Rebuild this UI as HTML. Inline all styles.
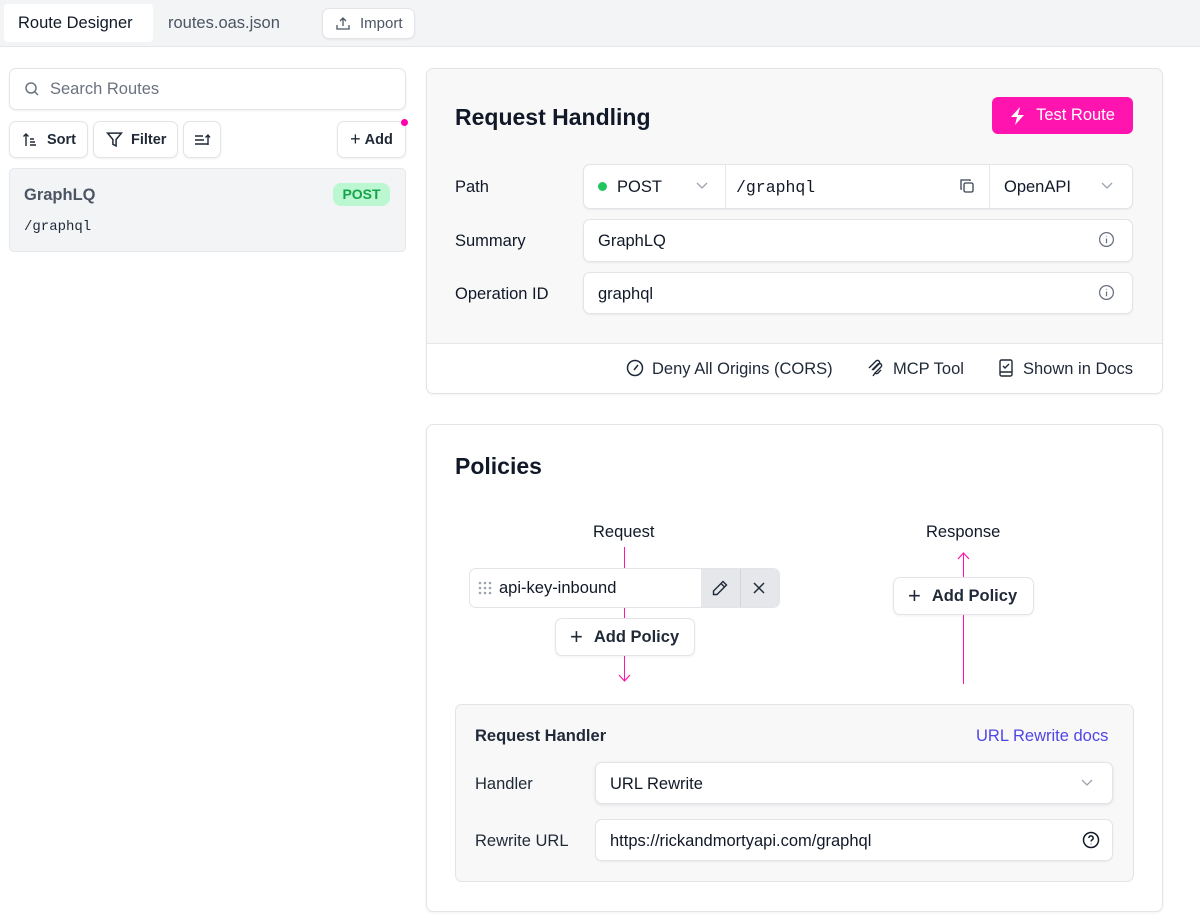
<!DOCTYPE html>
<html><head><style>
*{box-sizing:border-box;margin:0;padding:0}
body{width:1200px;height:924px;position:relative;background:#fff;font-family:"Liberation Sans",sans-serif;color:#111827;overflow:hidden}
.a{position:absolute}
.box{position:absolute;border:1px solid #e2e4e8;border-radius:7px;background:#fff;box-shadow:0 1px 2px rgba(0,0,0,.06)}
.t{position:absolute;white-space:nowrap}
.fx{display:flex;align-items:center}
svg{display:block}
.mono{font-family:"Liberation Mono",monospace}
</style></head><body>
<div class="a" style="left:0;top:0;width:1200px;height:47px;background:#f3f4f6;border-bottom:1px solid #e5e7eb"></div>
<div class="a" style="left:4px;top:4px;width:149px;height:38px;background:#fff;border-radius:4px"></div>
<div class="t" style="left:18px;top:14px;font-size:16.5px;color:#111827">Route Designer</div>
<div class="t" style="left:168px;top:14px;font-size:16.5px;color:#4b5563">routes.oas.json</div>
<div class="box fx" style="left:322px;top:8px;width:93px;height:31px;padding-left:12px;font-size:15px;color:#4b5563">
<svg width="16" height="16" viewBox="0 0 16 16" fill="none" stroke="#4b5563" stroke-width="1.3"><path d="M8 10V2M5 5l3-3 3 3M2 9v4h12V9"/></svg><span style="margin-left:9px">Import</span></div>

<div class="box fx" style="left:9px;top:68px;width:397px;height:42px;padding-left:14px;font-size:16.5px;color:#6b7280">
<svg width="16" height="16" viewBox="0 0 16 16" fill="none" stroke="#6b7280" stroke-width="1.5"><circle cx="7" cy="7" r="5"/><path d="M11 11l3 3"/></svg><span style="margin-left:10px">Search Routes</span></div>
<div class="box fx" style="left:9px;top:121px;width:79px;height:37px;padding-left:12px;font-size:14.5px;font-weight:bold;color:#1f2937">
<svg width="16" height="16" viewBox="0 0 16 16" fill="none" stroke="#1f2937" stroke-width="1.4"><path d="M4 14V2M1.5 4.5L4 2l2.5 2.5M8 7h4M8 10h5M8 13h6"/></svg><span style="margin-left:9px">Sort</span></div>
<div class="box fx" style="left:93px;top:121px;width:85px;height:37px;padding-left:12px;font-size:14.5px;font-weight:bold;color:#1f2937">
<svg width="17" height="17" viewBox="0 0 16 16" fill="none" stroke="#1f2937" stroke-width="1.4"><path d="M1.5 2h13L9.5 8v6l-3-1.5V8z"/></svg><span style="margin-left:8px">Filter</span></div>
<div class="box fx" style="left:183px;top:121px;width:38px;height:37px;justify-content:center">
<svg width="17" height="16" viewBox="0 0 17 16" fill="none" stroke="#1f2937" stroke-width="1.4"><path d="M1 4h8M1 8h9M1 12h13M14 13V3M11.5 5.5L14 3l2 2.5"/></svg></div>
<div class="box fx" style="left:337px;top:121px;width:69px;height:37px;justify-content:center;font-size:14.5px;font-weight:bold;color:#1f2937"><span style="font-weight:normal;font-size:18px;margin-right:4px">+</span>Add</div>
<div class="a" style="left:401px;top:119px;width:7px;height:7px;border-radius:50%;background:#ff00aa"></div>
<div class="a" style="left:9px;top:168px;width:397px;height:84px;background:#f3f4f6;border:1px solid #e5e7eb;border-radius:5px"></div>
<div class="t" style="left:24px;top:186px;font-size:16.5px;font-weight:bold;color:#4b5563">GraphLQ</div>
<div class="a" style="left:333px;top:183px;width:57px;height:23px;background:#bbf7d0;border-radius:8px;color:#16a34a;font-weight:bold;font-size:14px;text-align:center;line-height:23px">POST</div>
<div class="t mono" style="left:24px;top:219px;font-size:14px;color:#1f2937">/graphql</div>

<div class="a" style="left:426px;top:68px;width:737px;height:326px;border:1px solid #e2e4e8;border-radius:7px;background:#fff;overflow:hidden;box-shadow:0 1px 2px rgba(0,0,0,.05)">
<div class="a" style="left:0;top:0;width:737px;height:275px;background:#f8f8f9;border-bottom:1px solid #e5e7eb"></div>
</div>
<div class="t" style="left:455px;top:104px;font-size:23px;font-weight:bold">Request Handling</div>
<div class="a fx" style="left:992px;top:97px;width:141px;height:37px;background:#ff14b0;border-radius:6px;color:#fff;font-size:16.5px;justify-content:center">
<svg width="16" height="18" viewBox="0 0 16 18" fill="#fff"><path d="M10 0L1 10h6l-2 8 9-10H8z"/></svg><span style="margin-left:10px">Test Route</span></div>

<div class="t" style="left:455px;top:178px;font-size:16.5px">Path</div>
<div class="t" style="left:455px;top:232px;font-size:16.5px">Summary</div>
<div class="t" style="left:455px;top:285px;font-size:16.5px">Operation ID</div>

<div class="box" style="left:583px;top:164px;width:550px;height:45px"></div>
<div class="a" style="left:725px;top:165px;width:1px;height:43px;background:#e5e7eb"></div>
<div class="a" style="left:989px;top:165px;width:1px;height:43px;background:#e5e7eb"></div>
<div class="a" style="left:598px;top:182px;width:9px;height:9px;border-radius:50%;background:#22c55e"></div>
<div class="t" style="left:617px;top:178px;font-size:16.5px">POST</div>
<svg class="a" style="left:695px;top:181px" width="14" height="10" viewBox="0 0 14 10" fill="none" stroke="#9ca3af" stroke-width="1.3"><path d="M2 2l5 5 5-5"/></svg>
<div class="t mono" style="left:736px;top:178px;font-size:16.5px">/graphql</div>
<svg class="a" style="left:959px;top:178px" width="16" height="16" viewBox="0 0 16 16" fill="none" stroke="#374151" stroke-width="1.3"><rect x="5" y="5" width="9" height="9" rx="1.5"/><path d="M11 3V2H2v9h1"/></svg>
<div class="t" style="left:1004px;top:178px;font-size:16.5px">OpenAPI</div>
<svg class="a" style="left:1100px;top:181px" width="14" height="10" viewBox="0 0 14 10" fill="none" stroke="#9ca3af" stroke-width="1.3"><path d="M2 2l5 5 5-5"/></svg>

<div class="box" style="left:583px;top:219px;width:550px;height:43px"></div>
<div class="t" style="left:598px;top:232px;font-size:16.5px">GraphLQ</div>
<svg class="a" style="left:1098px;top:231px" width="17" height="17" viewBox="0 0 16 16" fill="none" stroke="#6b7280" stroke-width="1.2"><circle cx="8" cy="8" r="6.5"/><path d="M8 7v4.5M8 4.6v.6"/></svg>
<div class="box" style="left:583px;top:272px;width:550px;height:42px"></div>
<div class="t" style="left:598px;top:285px;font-size:16.5px">graphql</div>
<svg class="a" style="left:1098px;top:284px" width="17" height="17" viewBox="0 0 16 16" fill="none" stroke="#6b7280" stroke-width="1.2"><circle cx="8" cy="8" r="6.5"/><path d="M8 7v4.5M8 4.6v.6"/></svg>

<svg class="a" style="left:626px;top:359px" width="18" height="18" viewBox="0 0 18 18" fill="none" stroke="#1f2937" stroke-width="1.5"><circle cx="9" cy="9" r="7.5"/><path d="M12 6l-4 5"/></svg>
<div class="t" style="left:652px;top:360px;font-size:16.5px;color:#1f2937">Deny All Origins (CORS)</div>
<svg class="a" style="left:866px;top:358px" width="20" height="20" viewBox="0 0 20 20" fill="none" stroke="#1f2937" stroke-width="1.4"><path d="M3 10l7-7a2 2 0 013 3l-6 6M6 12l6-6a2 2 0 013 3l-6 6a2 2 0 003 0l3-3M9 15l-2 3"/></svg>
<div class="t" style="left:893px;top:360px;font-size:16.5px;color:#1f2937">MCP Tool</div>
<svg class="a" style="left:998px;top:358px" width="16" height="20" viewBox="0 0 16 20" fill="none" stroke="#1f2937" stroke-width="1.4"><rect x="2" y="2" width="12" height="16" rx="1.5"/><path d="M2 14h12M5 8l2 2 4-4"/></svg>
<div class="t" style="left:1023px;top:360px;font-size:16.5px;color:#1f2937">Shown in Docs</div>

<div class="box" style="left:426px;top:424px;width:737px;height:488px"></div>
<div class="t" style="left:455px;top:453px;font-size:23px;font-weight:bold">Policies</div>
<div class="t" style="left:593px;top:523px;font-size:16.5px">Request</div>
<div class="t" style="left:926px;top:523px;font-size:16.5px">Response</div>
<div class="a" style="left:624px;top:547px;width:1.3px;height:134px;background:#ff14b0"></div>
<svg class="a" style="left:618px;top:670px" width="13" height="12" viewBox="0 0 13 12" fill="none" stroke="#ff14b0" stroke-width="1.2"><path d="M1 5l5.5 6L12 5"/></svg>
<div class="a" style="left:963px;top:553px;width:1.3px;height:131px;background:#ff14b0"></div>
<svg class="a" style="left:957px;top:552px" width="13" height="12" viewBox="0 0 13 12" fill="none" stroke="#ff14b0" stroke-width="1.2"><path d="M1 7l5.5-6L12 7"/></svg>

<div class="a" style="left:469px;top:568px;width:311px;height:40px;border:1px solid #e2e4e8;border-radius:7px;background:#fff;overflow:hidden">
<div class="a" style="left:231px;top:0;width:80px;height:40px;background:#e5e7eb"></div>
<div class="a" style="left:270px;top:0;width:1px;height:40px;background:#d1d5db"></div>
</div>
<svg class="a" style="left:478px;top:581px" width="14" height="14" viewBox="0 0 14 14" fill="#9ca3af"><circle cx="2" cy="2" r="1.3"/><circle cx="7" cy="2" r="1.3"/><circle cx="12" cy="2" r="1.3"/><circle cx="2" cy="7" r="1.3"/><circle cx="7" cy="7" r="1.3"/><circle cx="12" cy="7" r="1.3"/><circle cx="2" cy="12" r="1.3"/><circle cx="7" cy="12" r="1.3"/><circle cx="12" cy="12" r="1.3"/></svg>
<div class="t" style="left:499px;top:579px;font-size:16.5px">api-key-inbound</div>
<svg class="a" style="left:711px;top:579px" width="18" height="18" viewBox="0 0 18 18" fill="none" stroke="#1f2937" stroke-width="1.4"><path d="M12 2.5l3.5 3.5L6 15.5H2.5V12zM10 4.5l3.5 3.5"/></svg>
<svg class="a" style="left:753px;top:582px" width="12" height="12" viewBox="0 0 12 12" fill="none" stroke="#1f2937" stroke-width="1.5"><path d="M1 1l10 10M11 1L1 11"/></svg>

<div class="box fx" style="left:555px;top:618px;width:140px;height:38px;padding-left:14px;font-size:16.5px;font-weight:bold;color:#1f2937"><span style="font-weight:normal;font-size:22px;margin-right:11px">+</span>Add Policy</div>
<div class="box fx" style="left:893px;top:577px;width:141px;height:38px;padding-left:14px;font-size:16.5px;font-weight:bold;color:#1f2937"><span style="font-weight:normal;font-size:22px;margin-right:11px">+</span>Add Policy</div>

<div class="a" style="left:455px;top:704px;width:679px;height:178px;background:#f8f8f9;border:1px solid #e2e4e8;border-radius:7px"></div>
<div class="t" style="left:475px;top:727px;font-size:16.5px;font-weight:bold;color:#1f2937">Request Handler</div>
<div class="t" style="left:976px;top:727px;font-size:16.5px;color:#4f46e5">URL Rewrite docs</div>
<div class="t" style="left:475px;top:775px;font-size:16.5px;color:#1f2937">Handler</div>
<div class="t" style="left:475px;top:832px;font-size:16.5px;color:#1f2937">Rewrite URL</div>
<div class="box" style="left:595px;top:762px;width:518px;height:42px;box-shadow:0 1px 3px rgba(0,0,0,.1)"></div>
<div class="t" style="left:610px;top:775px;font-size:16.5px">URL Rewrite</div>
<svg class="a" style="left:1080px;top:778px" width="14" height="10" viewBox="0 0 14 10" fill="none" stroke="#9ca3af" stroke-width="1.3"><path d="M2 2l5 5 5-5"/></svg>
<div class="box" style="left:595px;top:819px;width:518px;height:42px"></div>
<div class="t" style="left:610px;top:832px;font-size:16.5px">https://rickandmortyapi.com/graphql</div>
<svg class="a" style="left:1082px;top:831px" width="18" height="18" viewBox="0 0 18 18" fill="none" stroke="#111827" stroke-width="1.5"><circle cx="9" cy="9" r="7.5"/><path d="M6.8 7a2.2 2.2 0 114 1.3c-.8.6-1.8 1-1.8 2.2M9 12.8v.4"/></svg>
</body></html>
